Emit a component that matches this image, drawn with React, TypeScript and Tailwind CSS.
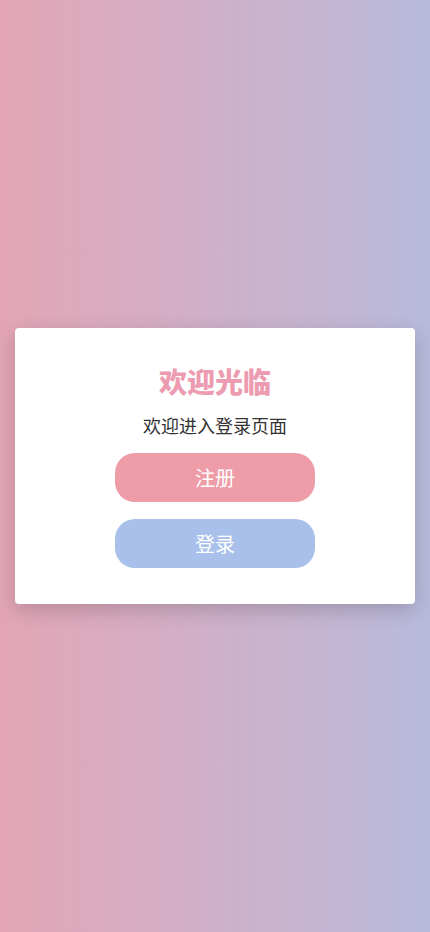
export default function App() {
  return (
    <div
      className="min-h-screen w-full flex items-center justify-center px-[15px] bg-gradient-to-r from-[#e3a5b5] to-[#b8badc]"
      style={{ fontFamily: '"Noto Sans CJK SC", "Noto Sans", sans-serif' }}
    >
      <div className="w-full bg-white rounded-[4px] shadow-[0_6px_20px_rgba(0,0,0,0.18)] pt-[35px] pb-[36px] flex flex-col items-center">
        <h1 className="text-[28px] leading-[36px] font-black text-[#ec9bb0]">欢迎光临</h1>
        <p className="mt-[13px] text-[18px] leading-[26px] text-[#333333]">欢迎进入登录页面</p>
        <button className="mt-[15px] w-[200px] h-[49px] rounded-[20px] bg-[#ee9ca7] text-white text-[20px]">
          注册
        </button>
        <button className="mt-[17px] w-[200px] h-[49px] rounded-[20px] bg-[#a8c0ea] text-white text-[20px]">
          登录
        </button>
      </div>
    </div>
  );
}
